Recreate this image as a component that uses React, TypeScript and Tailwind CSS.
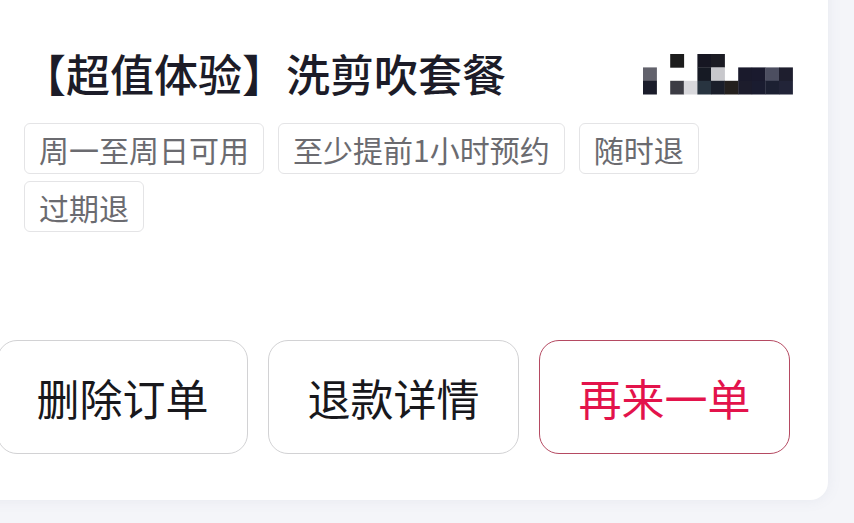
import React from "react";

const W = "#ffffff";
const mosaic: string[][] = [
  [W, W, "#1c1c1c", W, "#161622", "#1c1c24", W, W, W, W, W],
  ["#62626c", W, W, W, "#161a24", "#c8c8cc", W, "#1a1a2c", "#1a1a2e", "#4c4e60", "#1e1e2e"],
  ["#1a1c2a", W, "#3c3c44", "#d8d8dc", "#283440", "#1a1e2a", "#24201e", "#1c1c2c", "#1a1c30", "#1c2032", "#222438"],
];

function Mosaic() {
  const cw = 13.6;
  const ch = 13.4;
  return (
    <svg width={150} height={41} viewBox="0 0 150 41" className="shrink-0">
      {mosaic.map((row, r) =>
        row.map((c, i) =>
          c === W ? null : (
            <rect key={`${r}-${i}`} x={i * cw} y={r * ch} width={cw + 0.3} height={ch + 0.3} fill={c} />
          )
        )
      )}
    </svg>
  );
}

const tags = ["周一至周日可用", "至少提前1小时预约", "随时退", "过期退"];

export default function App() {
  return (
    <div
      className="w-[854px] h-[523px] overflow-hidden bg-[#f4f5f9]"
      style={{ fontFamily: '"Noto Sans CJK SC", "Noto Sans", sans-serif' }}
    >
      <div className="ml-[-40px] mt-[-20px] w-[868px] h-[520px] bg-white rounded-br-[18px] shadow-[0_0_14px_rgba(120,130,160,0.10)] pl-[64px] pr-[38px] pt-[71px] flex flex-col">
        <div className="flex items-center justify-between h-[44px]">
          <div className="text-[44px] leading-[44px] font-medium text-[#1c1c28] ml-[-2px]">
            【超值体验】洗剪吹套餐
          </div>
          <div className="mr-[-3px] mt-[2px]">
            <Mosaic />
          </div>
        </div>
        <div className="mt-[28px] flex flex-wrap gap-x-[14px] gap-y-[7px] w-[700px]">
          {tags.map((t) => (
            <div
              key={t}
              className="h-[51px] px-[14px] flex items-center border border-[#e4e4e6] rounded-[6px] text-[30px] text-[#6b6b70] leading-none"
            >
              {t}
            </div>
          ))}
        </div>
        <div className="mt-[108px] flex justify-end gap-[20px]">
          <button className="w-[251px] h-[114px] shrink-0 rounded-[20px] border-[1.5px] border-[#d2d2d4] bg-white text-[43px] text-[#18181c] flex items-center justify-center">
            删除订单
          </button>
          <button className="w-[251px] h-[114px] shrink-0 rounded-[20px] border-[1.5px] border-[#d2d2d4] bg-white text-[43px] text-[#18181c] flex items-center justify-center">
            退款详情
          </button>
          <button className="w-[251px] h-[114px] shrink-0 rounded-[20px] border-[1.5px] border-[#b54a62] bg-white text-[43px] text-[#e3134b] flex items-center justify-center">
            再来一单
          </button>
        </div>
      </div>
    </div>
  );
}
